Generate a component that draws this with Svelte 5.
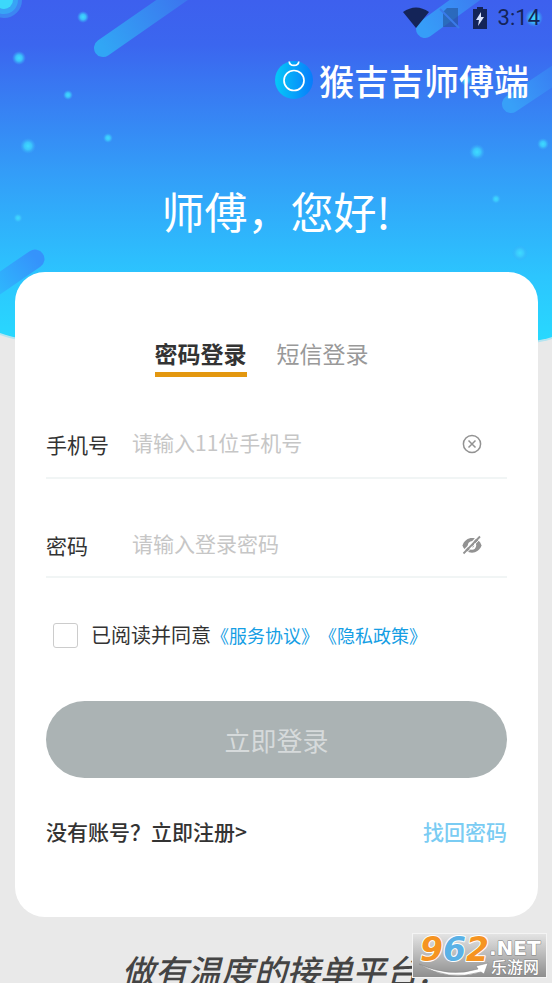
<script>
  let mode = $state('password');
  let phone = $state('');
  let password = $state('');
  let visible = $state(false);
  let agreed = $state(false);

  const dots = [
    [83, 17, 6], [19, 58, 7], [68, 95, 5], [28, 146, 8], [108, 138, 5], [18, 218, 5],
    [477, 152, 8], [543, 144, 6], [496, 199, 5], [520, 253, 8], [534, 18, 9], [466, 80, 6]
  ];
</script>

<div class="page">
  <svg class="sky" viewBox="0 0 552 370" preserveAspectRatio="none" aria-hidden="true">
    <defs>
      <linearGradient id="sky" gradientUnits="userSpaceOnUse" x1="0" y1="0" x2="0" y2="345">
        <stop offset="0" stop-color="#3d60ee" />
        <stop offset="0.13" stop-color="#3b66ef" />
        <stop offset="0.5" stop-color="#339df8" />
        <stop offset="0.8" stop-color="#2cc5fe" />
        <stop offset="1" stop-color="#28dafe" />
      </linearGradient>
      <linearGradient id="comet" gradientUnits="userSpaceOnUse" x1="103" y1="48" x2="190" y2="-12">
        <stop offset="0" stop-color="#31a6f5" />
        <stop offset="1" stop-color="#3d70ee" />
      </linearGradient>
      <linearGradient id="comet2" gradientUnits="userSpaceOnUse" x1="425" y1="29" x2="485" y2="-10">
        <stop offset="0" stop-color="#369df8" />
        <stop offset="1" stop-color="#3d78f0" />
      </linearGradient>
      <linearGradient id="comet3" gradientUnits="userSpaceOnUse" x1="510" y1="104" x2="560" y2="70">
        <stop offset="0" stop-color="#38a0f8" />
        <stop offset="1" stop-color="#397bf2" />
      </linearGradient>
      <linearGradient id="comet4" gradientUnits="userSpaceOnUse" x1="36" y1="258" x2="-5" y2="292">
        <stop offset="0" stop-color="#3593fb" />
        <stop offset="1" stop-color="#2eb9fd" />
      </linearGradient>
      <radialGradient id="dot">
        <stop offset="0" stop-color="#3edcff" />
        <stop offset="0.45" stop-color="#3bcbfd" stop-opacity="0.9" />
        <stop offset="1" stop-color="#39a9f8" stop-opacity="0" />
      </radialGradient>
    </defs>
    <path d="M0 0H552V339C470 364 80 364 0 335Z" fill="#b4e4f0" />
    <path d="M0 0H552V337C470 362 80 362 0 333Z" fill="url(#sky)" />
    <g fill="none" stroke-linecap="round">
      <path d="M103 48L185 -9" stroke="url(#comet)" stroke-width="18" />
      <path d="M425 29L480 -11" stroke="url(#comet2)" stroke-width="18" />
      <path d="M511 104L565 68" stroke="url(#comet3)" stroke-width="18" />
      <path d="M35 259L-6 287" stroke="url(#comet4)" stroke-width="19" />
    </g>
    <circle cx="4" cy="0" r="18" fill="#3c86f2" />
    <circle cx="4" cy="0" r="14" fill="#38a4f5" />
    <circle cx="4" cy="0" r="9" fill="#3cd8fb" />
    {#each dots as [x, y, r]}
      <circle cx={x} cy={y} {r} fill="url(#dot)" />
    {/each}
  </svg>

  <header>
    <div class="status">
      <svg width="28" height="22" viewBox="0 0 28 22" aria-hidden="true">
        <path d="M1 5Q14 -4 27 5L14 21Z" fill="#142458" />
      </svg>
      <svg width="22" height="22" viewBox="0 0 22 22" aria-hidden="true">
        <path d="M8 1H19V20H4V5Z" fill="#24579e" opacity=".65" />
        <path d="M1 2L20 21" stroke="#3b7bea" stroke-width="2" />
      </svg>
      <svg class="battery" width="14" height="22" viewBox="0 0 14 22" aria-hidden="true">
        <path d="M4 0H10V2H14V22H0V2H4Z" fill="#142458" />
        <path d="M8 5L3 13H6L5 19L11 10H8Z" fill="#d9e4ff" />
      </svg>
      <time>3:14</time>
    </div>
    <div class="brand">
      <svg width="38" height="38" viewBox="0 0 38 38" aria-hidden="true">
        <defs>
          <linearGradient id="logo">
            <stop offset="0" stop-color="#05c8f8" />
            <stop offset="1" stop-color="#087cfb" />
          </linearGradient>
        </defs>
        <circle cx="19" cy="19" r="19" fill="url(#logo)" />
        <circle cx="19" cy="19.500" r="10" fill="none" stroke="#fff" stroke-width="1.700" />
        <path d="M14.200 0.500C14.500 5.700 23.500 5.700 23.800 0.500" fill="none" stroke="#fff" stroke-width="1.700" />
      </svg>
      <span>猴吉吉师傅端</span>
    </div>
    <h1>师傅，您好!</h1>
  </header>

  <main>
    <div class="tabs">
      <button type="button" class:active={mode === 'password'} onclick={() => (mode = 'password')}>密码登录</button>
      <button type="button" class:active={mode === 'sms'} onclick={() => (mode = 'sms')}>短信登录</button>
    </div>

    <form onsubmit={(e) => e.preventDefault()}>
      <div class="field">
        <label for="phone">手机号</label>
        <input id="phone" type="tel" placeholder="请输入11位手机号" bind:value={phone} />
        <button type="button" class="icon" aria-label="清除" onclick={() => (phone = '')}>
          <svg width="20" height="20" viewBox="0 0 20 20" fill="none" stroke="#929292" stroke-width="1.500">
            <circle cx="10" cy="10" r="8.600" />
            <path d="M6.500 6.500L13.500 13.500M13.500 6.500L6.500 13.500" />
          </svg>
        </button>
      </div>
      <div class="field">
        <label for="password">密码</label>
        <input id="password" type={visible ? 'text' : 'password'} placeholder="请输入登录密码" bind:value={password} />
        <button type="button" class="icon" aria-label="显示密码" onclick={() => (visible = !visible)}>
          <svg width="20" height="20" viewBox="0 0 20 20">
            <path d="M0.500 10.500C3.500 0.500 16.500 0.500 19.500 10.500C16.500 20 3.500 20 .5 10.500Z" fill="#929292" />
            <circle cx="10" cy="10.500" r="4.200" fill="#fff" />
            <path d="M10.500 8.500A2 2 0 0 1 10 12.500" fill="#929292" />
            <path d="M0.500 17L16.500 0.500" stroke="#fff" stroke-width="1.200" />
            <path d="M1.500 18.500L18 1.500" stroke="#929292" stroke-width="1.800" />
            <path d="M3 19.500L19.500 2.500" stroke="#fff" stroke-width="1" />
          </svg>
        </button>
      </div>

      <div class="terms">
        <input id="agree" type="checkbox" bind:checked={agreed} />
        <label for="agree">已阅读并同意</label>
        <div class="links"><a href="#service">《服务协议》</a><a href="#privacy">《隐私政策》</a></div>
      </div>

      <button type="submit" class="submit">立即登录</button>
    </form>

    <nav>
      <a class="register" href="#register">没有账号？立即注册&gt;</a>
      <a class="recover" href="#recover">找回密码</a>
    </nav>
  </main>

  <p class="slogan">做有温度的接单平台!</p>

  <svg class="stamp" width="135" height="45" viewBox="0 0 135 45" role="img" aria-label="962.NET 乐游网">
    <defs>
      <linearGradient id="metal" x1="0" y1="0" x2="0" y2="1">
        <stop offset="0" stop-color="#e4e4e4" />
        <stop offset="0.5" stop-color="#b9b9b9" />
        <stop offset="1" stop-color="#8d8d8d" />
      </linearGradient>
    </defs>
    <rect x=".5" y=".5" width="134" height="44" fill="url(#metal)" stroke="#f4f4f4" />
    <path d="M7 31Q38 45 66 36L64 33L76 30L72 41L69 39Q36 49 7 31Z" fill="#fff" stroke="#888" stroke-width=".6" />
    <text class="digits" x="8" y="28"><tspan fill="#f59422">9</tspan><tspan fill="#5ab1e6">6</tspan><tspan fill="#f59422">2</tspan></text>
    <text class="net" x="77" y="22">.NET</text>
    <text class="cn" x="79" y="40">乐游网</text>
  </svg>
</div>

<style>
  :global(body) {
    margin: 0;
  }
  .page {
    position: relative;
    height: 100vh;
    overflow: hidden;
    background: #e9e9e9;
    color: #333;
    font-family: 'Noto Sans CJK SC', sans-serif;
  }
  .page * {
    box-sizing: border-box;
  }
  .sky {
    position: absolute;
    top: 0;
    left: 0;
    width: 100%;
    height: 370px;
  }
  header,
  main,
  .slogan {
    position: relative;
  }
  header {
    color: #fff;
  }
  .status {
    display: flex;
    justify-content: flex-end;
    align-items: center;
    gap: 9px;
    height: 36px;
    padding-right: 12px;
  }
  .battery {
    margin: 0 2px 0 3px;
  }
  time {
    color: #142458;
    font: 400 22px/24px Roboto, sans-serif;
  }
  .brand {
    display: flex;
    justify-content: flex-end;
    align-items: center;
    gap: 6px;
    height: 88px;
    padding-right: 23px;
    font-size: 35px;
    font-weight: 500;
    line-height: 48px;
  }
  h1 {
    margin: 0;
    padding-top: 54px;
    height: 148px;
    font-size: 43px;
    font-weight: 400;
    line-height: 64px;
    text-align: center;
  }
  main {
    margin: 0 14px 0 15px;
    padding: 66px 31px 70px;
    border-radius: 30px;
    background: #fff;
  }
  button {
    padding: 0;
    border: 0;
    background: none;
    font-family: inherit;
    cursor: pointer;
  }
  .tabs {
    display: flex;
    justify-content: center;
    gap: 30px;
    padding-right: 30px;
  }
  .tabs button {
    height: 39px;
    padding-bottom: 5px;
    border-bottom: 5px solid transparent;
    color: #999;
    font-size: 23px;
    font-weight: 400;
    line-height: 28px;
  }
  .tabs .active {
    border-color: #e3970f;
    color: #333;
    font-weight: 700;
  }
  .field {
    display: flex;
    align-items: center;
    height: 99px;
    padding: 36px 25px 2px 0;
    border-bottom: 2px solid #f1f5f5;
  }
  .field:first-child {
    height: 102px;
  }
  .field label {
    width: 86px;
    font-size: 21px;
    line-height: 30px;
  }
  .field input {
    flex: 1;
    min-width: 0;
    height: 34px;
    padding: 0 0 4px;
    border: 0;
    outline: 0;
    background: none;
    color: #333;
    font: 400 21px/30px 'Noto Sans CJK SC', sans-serif;
  }
  .field input::placeholder {
    color: #c6c6c6;
    opacity: 1;
  }
  .icon,
  .icon svg {
    display: block;
  }
  .terms {
    display: flex;
    align-items: center;
    margin-top: 42px;
    padding-left: 7px;
    height: 30px;
    font-size: 20px;
    line-height: 30px;
  }
  .terms input {
    appearance: none;
    width: 25px;
    height: 25px;
    margin: 0 13px 0 0;
    border: 1px solid #ccc;
    border-radius: 3px;
    background: #fff;
  }
  .terms input:checked {
    background: #169bd5;
  }
  .links {
    display: flex;
    font-size: 18px;
  }
  .links a {
    color: #159ee4;
  }
  a {
    text-decoration: none;
  }
  .submit {
    display: block;
    width: 100%;
    height: 77px;
    margin-top: 51px;
    border-radius: 39px;
    background: #abb3b4;
    color: #d6dadb;
    font-size: 26px;
    font-weight: 400;
  }
  nav {
    display: flex;
    justify-content: space-between;
    margin-top: 37px;
    font-size: 21px;
    font-weight: 500;
    line-height: 32px;
  }
  .register {
    color: #333;
  }
  .recover {
    color: #7accf3;
  }
  .slogan {
    margin: 29px 0 0;
    color: #444;
    font-size: 33px;
    font-style: italic;
    font-weight: 500;
    line-height: 48px;
    text-align: center;
    white-space: nowrap;
  }
  .stamp {
    position: absolute;
    right: 5px;
    bottom: 5px;
  }
  .stamp text {
    paint-order: stroke;
    stroke-linejoin: round;
  }
  .digits {
    stroke: #fff;
    stroke-width: 2px;
    font: italic 700 33px 'DejaVu Sans', sans-serif;
  }
  .net,
  .cn {
    fill: #fff;
    stroke: #808080;
    stroke-width: 1px;
  }
  .net {
    font: 700 20px 'DejaVu Sans', sans-serif;
  }
  .cn {
    font: 500 16px 'Noto Sans CJK SC', sans-serif;
  }
</style>
